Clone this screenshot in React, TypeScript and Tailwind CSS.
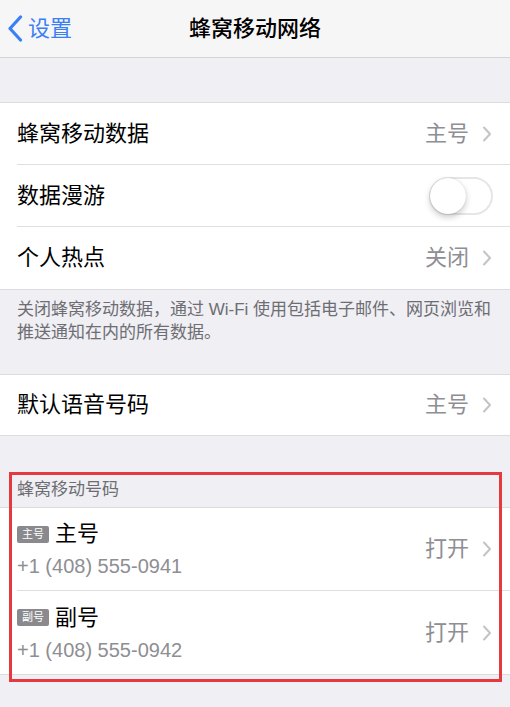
const font = { fontFamily: '"Liberation Sans", "Noto Sans CJK SC", sans-serif' };

function Chevron() {
  return (
    <svg width="10" height="16" viewBox="0 0 10 16" className="ml-[13px] shrink-0">
      <polyline points="2,1.5 8,8 2,14.5" fill="none" stroke="#c4c4c8" strokeWidth="2" strokeLinecap="round" strokeLinejoin="round" />
    </svg>
  );
}

function Row({ label, value, last, h = 'h-[62px]' }: { label: string; value?: string; last?: boolean; h?: string }) {
  return (
    <div className={`flex ${h} items-stretch pl-[17px]`}>
      <div className={`flex flex-1 items-center pr-[18px] ${last ? '' : 'border-b border-[#dfdfe2]'}`}>
        <span className="flex-1 text-[22px] leading-none text-black">{label}</span>
        {value && (
          <>
            <span className="text-[22px] leading-none text-[#8e8e93]">{value}</span>
            <Chevron />
          </>
        )}
      </div>
    </div>
  );
}

function Toggle() {
  return (
    <div className="relative h-[38px] w-[64px] rounded-full border-[2px] border-[#e6e6ea] bg-white">
      <div className="absolute left-[-1px] top-[-1px] h-[36px] w-[36px] rounded-full bg-white shadow-[0_3px_6px_rgba(0,0,0,0.22),0_0_1px_rgba(0,0,0,0.2)]" />
    </div>
  );
}

function SimRow({ badge, name, phone, last }: { badge: string; name: string; phone: string; last?: boolean }) {
  return (
    <div className="flex h-[83px] items-stretch pl-[17px]">
      <div className={`flex flex-1 items-center pr-[18px] ${last ? '' : 'border-b border-[#dfdfe2]'}`}>
        <div className="flex flex-1 flex-col gap-[7px] pt-[1px]">
          <div className="flex items-center">
            <span className="mr-[6px] flex h-[17px] w-[32px] items-center justify-center rounded-[2px] bg-[#8a8a8e] text-[11px] leading-none text-white">
              {badge}
            </span>
            <span className="text-[22px] leading-[26px] text-black">{name}</span>
          </div>
          <span className="text-[20px] leading-[24px] text-[#8e8e93]">{phone}</span>
        </div>
        <span className="text-[22px] leading-none text-[#8e8e93]">打开</span>
        <Chevron />
      </div>
    </div>
  );
}

export default function App() {
  return (
    <div className="relative h-[707px] w-[510px] overflow-hidden bg-[#efeff4]" style={font}>
      <div className="grid h-[58px] grid-cols-[1fr_auto_1fr] items-center border-b border-[#d4d4d7] bg-[#f6f6f7]">
        <div className="flex items-center pl-[7px] text-[#3a7ff6]">
          <svg width="16" height="27" viewBox="0 0 16 27">
            <polyline points="13.5,2 3,13.5 13.5,25" fill="none" stroke="#3a7ff6" strokeWidth="3.2" strokeLinecap="round" strokeLinejoin="round" />
          </svg>
          <span className="ml-[5px] text-[22px] leading-none">设置</span>
        </div>
        <div className="text-[22px] font-medium leading-none text-black">蜂窝移动网络</div>
        <div />
      </div>

      <div className="h-[44px]" />

      <div className="border-y border-[#dcdce0] bg-white">
        <Row label="蜂窝移动数据" value="主号" />
        <div className="flex h-[62px] items-stretch pl-[17px]">
          <div className="flex flex-1 items-center border-b border-[#dfdfe2] pr-[17px]">
            <span className="flex-1 text-[22px] leading-none text-black">数据漫游</span>
            <Toggle />
          </div>
        </div>
        <Row label="个人热点" value="关闭" last />
      </div>

      <div className="whitespace-nowrap px-[17px] pt-[8px] text-[17px] leading-[23px] text-[#6d6d72]">
        关闭蜂窝移动数据，通过 Wi-Fi 使用包括电子邮件、网页浏览和
        <br />
        推送通知在内的所有数据。
      </div>

      <div className="h-[30px]" />

      <div className="border-y border-[#dcdce0] bg-white">
        <Row label="默认语音号码" value="主号" last h="h-[60px]" />
      </div>

      <div className="flex h-[71px] items-end px-[17px] pb-[5px] text-[17px] leading-[24px] text-[#6d6d72]">蜂窝移动号码</div>

      <div className="border-y border-[#dcdce0] bg-white">
        <SimRow badge="主号" name="主号" phone="+1 (408) 555-0941" />
        <SimRow badge="副号" name="副号" phone="+1 (408) 555-0942" last />
      </div>

      <div className="pointer-events-none absolute left-[9px] top-[472px] h-[210px] w-[493px] border-[3px] border-[#e3393f]" />
    </div>
  );
}
